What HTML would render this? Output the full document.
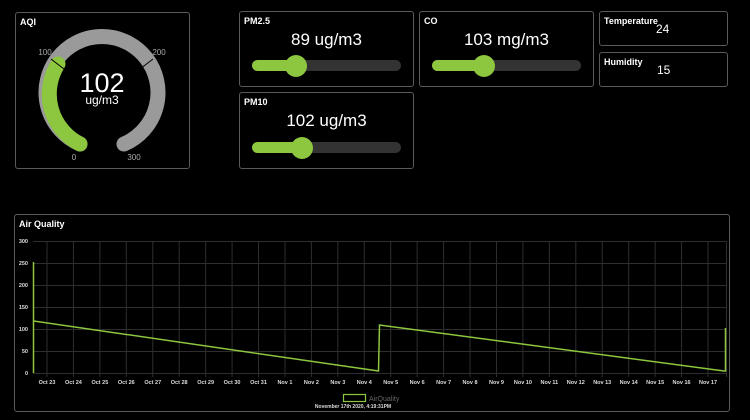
<!DOCTYPE html>
<html><head><meta charset="utf-8"><style>
html,body{margin:0;padding:0;background:#000;width:750px;height:420px;overflow:hidden;font-family:"Liberation Sans",sans-serif;color:#fff}
.p{position:absolute;border:1px solid #5a5a5a;border-radius:3px;box-sizing:border-box}
.t{position:absolute;left:4px;top:4px;font-size:9px;font-weight:bold}
.v{position:absolute;left:0;right:0;text-align:center;font-size:17px}
.tr{position:absolute;left:12px;right:12px;height:11px;border-radius:6px;background:#333}
.fl{position:absolute;left:0;top:0;height:11px;border-radius:6px;background:#8dc63f}
.kn{position:absolute;width:22px;height:22px;border-radius:50%;background:#8dc63f;top:-5.5px}
</style></head><body>
<div class="p" style="left:15px;top:12px;width:175px;height:157px">
<div class="t">AQI</div>
<svg width="175" height="157" style="position:absolute;left:-1px;top:-1px">
<g transform="translate(-15,-12)">
<path d="M80 144 A56 56 0 1 1 124 144" fill="none" stroke="#9a9a9a" stroke-width="15" stroke-linecap="round"/>
<path d="M80 144 A56 56 0 0 1 58 64" fill="none" stroke="#8dc63f" stroke-width="15" stroke-linecap="round"/>
<line x1="51" y1="59" x2="64" y2="69" stroke="#000" stroke-width="1"/>
<line x1="153" y1="59" x2="140" y2="69" stroke="#000" stroke-width="1"/>
<text x="102" y="92" font-size="27" fill="#fff" text-anchor="middle">102</text>
<text x="102" y="104" font-size="12" fill="#fff" text-anchor="middle">ug/m3</text>
<text x="45" y="55" font-size="8" fill="#aaa" text-anchor="middle">100</text>
<text x="159" y="55" font-size="8" fill="#aaa" text-anchor="middle">200</text>
<text x="74" y="160" font-size="8" fill="#aaa" text-anchor="middle">0</text>
<text x="134" y="160" font-size="8" fill="#aaa" text-anchor="middle">300</text>
</g></svg>
</div>
<div class="p" style="left:239px;top:11px;width:175px;height:76px"><div class="t">PM2.5</div><div class="v" style="top:18px">89 ug/m3</div><div class="tr" style="top:48px"><div class="fl" style="width:46px"></div><div class="kn" style="left:33px"></div></div></div>
<div class="p" style="left:419px;top:11px;width:175px;height:76px"><div class="t">CO</div><div class="v" style="top:18px">103 mg/m3</div><div class="tr" style="top:48px"><div class="fl" style="width:52px"></div><div class="kn" style="left:41px"></div></div></div>
<div class="p" style="left:239px;top:92px;width:175px;height:77px"><div class="t">PM10</div><div class="v" style="top:18px">102 ug/m3</div><div class="tr" style="top:49px"><div class="fl" style="width:50px"></div><div class="kn" style="left:39px"></div></div></div>
<div class="p" style="left:599px;top:11px;width:129px;height:35px"><div class="t">Temperature</div><div style="position:absolute;left:56px;top:10px;font-size:12px">24</div></div>
<div class="p" style="left:599px;top:52px;width:129px;height:35px"><div class="t">Humidity</div><div style="position:absolute;left:57px;top:10px;font-size:12px">15</div></div>
<div class="p" style="left:14px;top:214px;width:716px;height:198px"><div class="t" style="font-size:9px">Air Quality</div></div>
<svg width="750" height="420" style="position:absolute;left:0;top:0">
<g stroke="#2e2e2e" stroke-width="1">
<line x1="33" y1="241.5" x2="726" y2="241.5"/><line x1="33" y1="263.5" x2="726" y2="263.5"/><line x1="33" y1="285.5" x2="726" y2="285.5"/><line x1="33" y1="307.5" x2="726" y2="307.5"/><line x1="33" y1="329.5" x2="726" y2="329.5"/><line x1="33" y1="351.5" x2="726" y2="351.5"/><line x1="33" y1="373.5" x2="726" y2="373.5"/>
<line x1="726.5" y1="241" x2="726.5" y2="377"/>
</g>
<g id="vg" stroke="#2e2e2e"></g>
<g font-size="5.5" font-weight="bold" fill="#ddd" text-anchor="end">
<text x="28" y="243">300</text><text x="28" y="265">250</text><text x="28" y="287">200</text><text x="28" y="309">150</text><text x="28" y="331">100</text><text x="28" y="353">50</text><text x="28" y="375">0</text>
</g>
<g id="xl" font-size="5.5" font-weight="bold" fill="#ddd" text-anchor="middle"></g>
<polyline points="33.5,373 33.5,262 33.5,321 378.5,371 379.5,325 724,371 725.5,371 725.5,328 725.5,344" fill="none" stroke="#8dc63f" stroke-width="1.5"/>
<rect x="343.5" y="394.5" width="22" height="7" fill="none" stroke="#8dc63f" stroke-width="1.2"/>
<text x="369" y="401" font-size="7" fill="#666">AirQuality</text>
<text x="353" y="408" font-size="5" font-weight="bold" fill="#ddd" text-anchor="middle">November 17th 2020, 4:19:31PM</text>
</svg>
<script>
var L=["Oct 23","Oct 24","Oct 25","Oct 26","Oct 27","Oct 28","Oct 29","Oct 30","Oct 31","Nov 1","Nov 2","Nov 3","Nov 4","Nov 5","Nov 6","Nov 7","Nov 8","Nov 9","Nov 10","Nov 11","Nov 12","Nov 13","Nov 14","Nov 15","Nov 16","Nov 17"];
var ns="http://www.w3.org/2000/svg",vg=document.getElementById("vg"),xl=document.getElementById("xl");
L.forEach(function(s,i){var x=47+i*26.44;var l=document.createElementNS(ns,"line");l.setAttribute("x1",x);l.setAttribute("x2",x);l.setAttribute("y1",241);l.setAttribute("y2",377);vg.appendChild(l);
var t=document.createElementNS(ns,"text");t.setAttribute("x",x);t.setAttribute("y",384);t.textContent=s;xl.appendChild(t);});
</script>
</body></html>
